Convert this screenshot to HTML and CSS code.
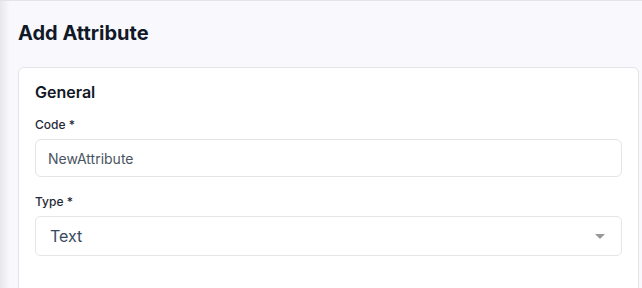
FILE: index.html
```html
<!DOCTYPE html>
<html lang="en">
<head>
<meta charset="utf-8">
<title>Add Attribute</title>
<link rel="stylesheet" href="styles.css">
</head>
<body>
<div class="page">
  <div class="edge"></div>
  <main class="main">
    <h1 class="title">Add Attribute</h1>
    <section class="card">
      <h2 class="card-title">General</h2>
      <div class="field">
        <label class="label" for="code">Code *</label>
        <input class="input" id="code" type="text" value="NewAttribute">
      </div>
      <div class="field">
        <label class="label">Type *</label>
        <div class="select">
          <span class="select-value">Text</span>
          <span class="select-arrow"></span>
        </div>
      </div>
    </section>
  </main>
</div>
</body>
</html>
```
FILE: styles.css
```css
html, body {
  margin: 0;
  padding: 0;
}
body {
  background: #f8f8fd;
  font-family: Inter, "Liberation Sans", sans-serif;
  color: #1f2937;
  height: 288px;
  overflow: hidden;
}
.page {
  display: flex;
  border-top: 1px solid #e3e4ea;
  min-height: 287px;
}
.edge {
  flex: 0 0 10px;
  background: linear-gradient(to right, #e7e7ed 0px, #eeeef3 4px, #f8f8fd 10px);
}
.main {
  flex: 1;
  padding: 18px 3px 0 8px;
  display: flex;
  flex-direction: column;
}
.title {
  margin: 0;
  font-size: 20px;
  line-height: 28px;
  font-weight: 700;
  color: #111827;
}
.card {
  margin-top: 20px;
  background: #fff;
  border: 1px solid #e3e4e8;
  border-radius: 6px;
  padding: 12px 16px 40px 16px;
  flex: 1;
}
.card-title {
  margin: 0;
  font-size: 16px;
  line-height: 24px;
  font-weight: 600;
  color: #111827;
}
.field {
  display: flex;
  flex-direction: column;
  gap: 6px;
  margin-top: 13px;
}
.field + .field {
  margin-top: 17px;
}
.label {
  font-size: 12px;
  line-height: 16px;
  font-weight: 500;
  color: #1f2937;
}
.input {
  box-sizing: border-box;
  height: 38px;
  border: 1px solid #e3e4e8;
  border-radius: 6px;
  padding: 0 12px;
  font-family: inherit;
  font-size: 14px;
  color: #4b5563;
  background: #fff;
  outline: none;
}
.select {
  box-sizing: border-box;
  height: 40px;
  border: 1px solid #e6e6e8;
  border-radius: 5px;
  display: flex;
  align-items: center;
  justify-content: space-between;
  padding: 0 16px 0 14px;
}
.select-value {
  font-size: 16px;
  color: #35495e;
}
.select-arrow {
  width: 0;
  height: 0;
  border-style: solid;
  border-width: 5px 5px 0 5px;
  border-color: #999 transparent transparent transparent;
}
```
